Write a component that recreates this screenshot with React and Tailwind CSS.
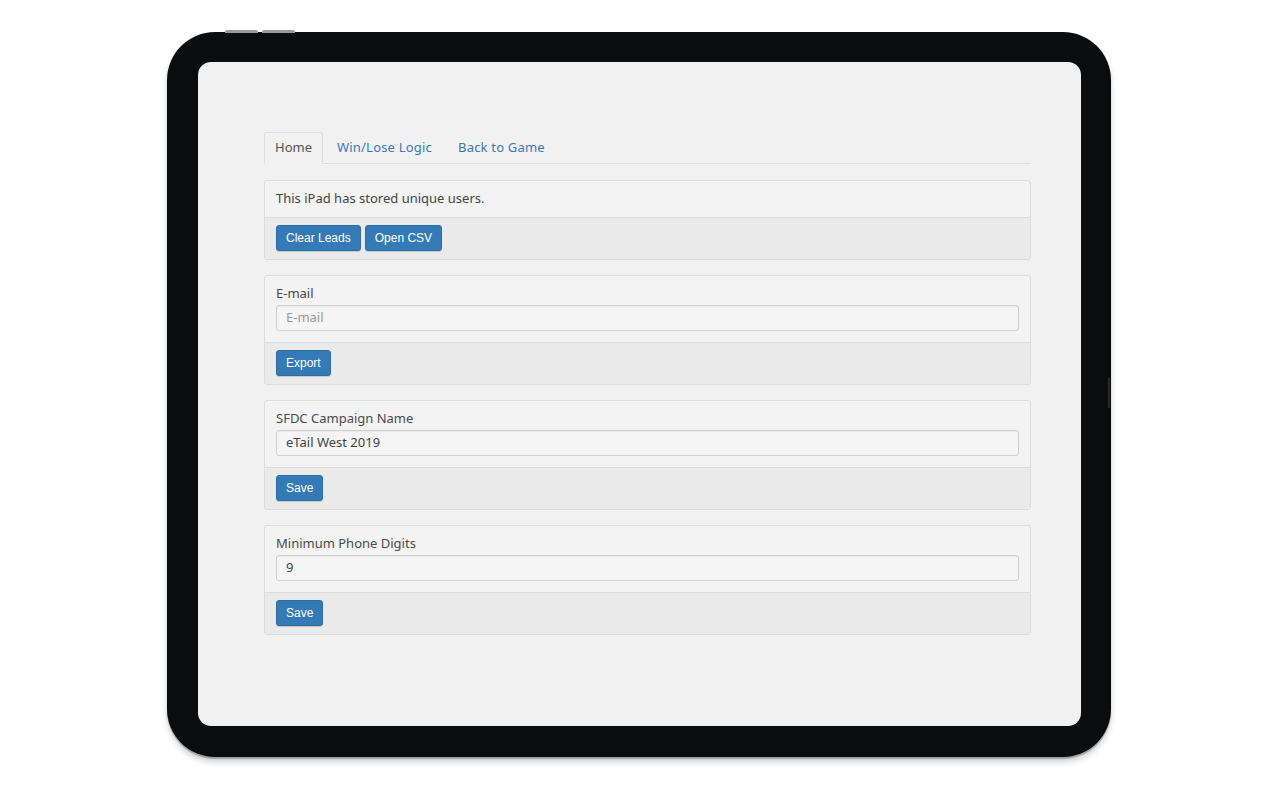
export default function App() {
  const labelFont = { fontFamily: '"Noto Sans", "Open Sans", sans-serif' };
  const Btn = ({ children }) => (
    <button
      className="h-[26px] px-[9px] rounded-[3px] bg-[#337ab7] border border-[#2e6da4] text-white text-[12px] leading-none shadow-[0_1px_1px_rgba(0,0,0,0.15)]"
      style={{ fontFamily: '"Liberation Sans", Arial, sans-serif' }}
    >
      {children}
    </button>
  );
  const Footer = ({ children }) => (
    <div className="border-t border-[#dcdcdc] bg-[#eaeaea] px-[11px] pt-[7px] pb-[8px] flex gap-[4px]">{children}</div>
  );
  const Field = ({ label, value, placeholder, btn }) => (
    <div className="border border-[#dcdcdc] rounded-[3px] bg-[#f3f3f3] overflow-hidden">
      <div className="px-[11px] pt-[8px] pb-[11px]">
        <div className="text-[13px] leading-[18px] text-[#4a4a4a] mb-[3px]" style={labelFont}>{label}</div>
        <div
          className="h-[26px] border border-[#cfcfcf] rounded-[3px] bg-[#f5f5f5] px-[9px] flex items-center text-[13px] shadow-[inset_0_1px_1px_rgba(0,0,0,0.05)]"
          style={labelFont}
        >
          {value ? <span className="text-[#444]">{value}</span> : <span className="text-[#999]">{placeholder}</span>}
        </div>
      </div>
      <Footer>
        <Btn>{btn}</Btn>
      </Footer>
    </div>
  );
  return (
    <div className="w-[1270px] h-[800px] bg-white pt-[32px] pl-[167px]">
      <div className="relative w-[944px] h-[725px]">
        {/* top buttons */}
        <div className="absolute left-[58px] -top-[2px] w-[33px] h-[3px] rounded-t-[2px] bg-[#9a9a9a]" />
        <div className="absolute left-[95px] -top-[2px] w-[33px] h-[3px] rounded-t-[2px] bg-[#9a9a9a]" />
        <div className="absolute right-[1px] top-[346px] w-[2px] h-[30px] bg-[#2a2a2a]" />
        <div className="w-full h-full rounded-[48px] bg-[#0b0c0d] pt-[30px] pr-[30px] pb-[31px] pl-[31px] shadow-[0_5px_6px_rgba(0,0,0,0.18),0_2px_1px_rgba(0,0,0,0.25)]">
          <div className="w-full h-full rounded-[13px] bg-[#f1f1f1] pt-[70px] pl-[66px] pr-[50px]" style={labelFont}>
            {/* tabs */}
            <div className="flex border-b border-[#dcdcdc] h-[32px] text-[13px]">
              <div className="h-[32px] px-[10px] flex items-center border border-[#dcdcdc] border-b-[#f1f1f1] rounded-t-[3px] bg-[#f1f1f1] text-[#555] mr-[2px]">
                Home
              </div>
              <div className="h-[31px] px-[12px] flex items-center text-[#3a79b8] mr-[2px] tracking-[0.2px]">Win/Lose Logic</div>
              <div className="h-[31px] px-[12px] flex items-center text-[#3a79b8] tracking-[0.2px]">Back to Game</div>
            </div>
            <div className="mt-[16px] flex flex-col gap-[15px]">
              <div className="border border-[#dcdcdc] rounded-[3px] bg-[#f3f3f3] overflow-hidden">
                <div className="px-[11px] h-[36px] flex items-center text-[13px] text-[#444]">This iPad has stored unique users.</div>
                <Footer>
                  <Btn>Clear Leads</Btn>
                  <Btn>Open CSV</Btn>
                </Footer>
              </div>
              <Field label="E-mail" placeholder="E-mail" btn="Export" />
              <Field label="SFDC Campaign Name" value="eTail West 2019" btn="Save" />
              <Field label="Minimum Phone Digits" value="9" btn="Save" />
            </div>
          </div>
        </div>
      </div>
    </div>
  );
}
